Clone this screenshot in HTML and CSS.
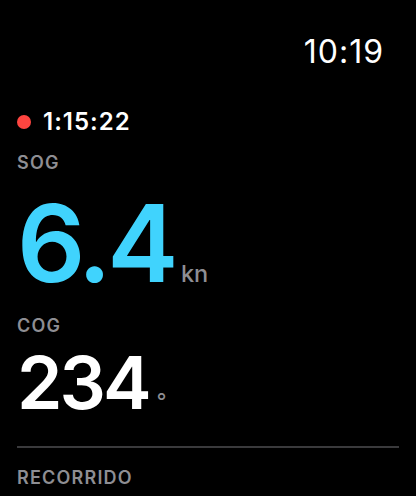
FILE: index.html
```html
<!DOCTYPE html>
<html lang="es">
<head>
<meta charset="utf-8">
<title>Navegación</title>
<link rel="stylesheet" href="styles.css">
</head>
<body>
<div class="screen">
  <div class="status"><span class="clock">10:19</span></div>
  <div class="timer"><span class="dot"></span><span class="elapsed">1:15:22</span></div>
  <div class="label sog-label">SOG</div>
  <div class="metric"><span class="big cyan">6.4</span><span class="unit">kn</span></div>
  <div class="label cog-label">COG</div>
  <div class="metric"><span class="mid">234</span><span class="deg">°</span></div>
  <div class="divider"></div>
  <div class="label rec-label">RECORRIDO</div>
</div>
</body>
</html>
```

FILE: styles.css
```css
html, body {
  margin: 0;
  padding: 0;
  background: #000;
}
body {
  font-family: Inter, "Noto Sans", sans-serif;
  color: #fff;
}
.screen {
  width: 416px;
  height: 496px;
  overflow: hidden;
  padding: 0 17px;
  box-sizing: border-box;
}
.status {
  display: flex;
  justify-content: flex-end;
  padding-top: 36px;
  padding-right: 15px;
}
.clock {
  font-size: 32px;
  line-height: 32px;
  font-weight: 400;
  letter-spacing: 1px;
}
.timer {
  display: flex;
  align-items: center;
  gap: 12px;
  margin-top: 42px;
  height: 24px;
}
.dot {
  width: 14px;
  height: 14px;
  border-radius: 50%;
  background: #fe4540;
}
.elapsed {
  font-size: 24px;
  line-height: 24px;
  font-weight: 600;
  letter-spacing: 1px;
}
.label {
  font-size: 18px;
  line-height: 18px;
  font-weight: 600;
  color: #8e8e93;
  letter-spacing: 1.2px;
}
.sog-label { margin-top: 20px; }
.cog-label { margin-top: 20px; }
.rec-label { margin-top: 21px; }
.metric {
  display: flex;
  align-items: baseline;
}
.big {
  font-size: 107px;
  line-height: 107px;
  font-weight: 600;
  letter-spacing: -4.5px;
  margin-top: 18px;
}
.cyan { color: #40d3fd; }
.unit {
  font-size: 23.5px;
  font-weight: 500;
  color: #8e8e93;
  margin-left: 7px;
}
.mid {
  font-size: 73px;
  line-height: 73px;
  font-weight: 600;
  letter-spacing: -3px;
  margin-top: 11px;
}
.deg {
  font-size: 22px;
  color: #8e8e93;
  margin-left: 8px;
}
.divider {
  margin-top: 27px;
  height: 2px;
  background: #3a3a3c;
}
```
